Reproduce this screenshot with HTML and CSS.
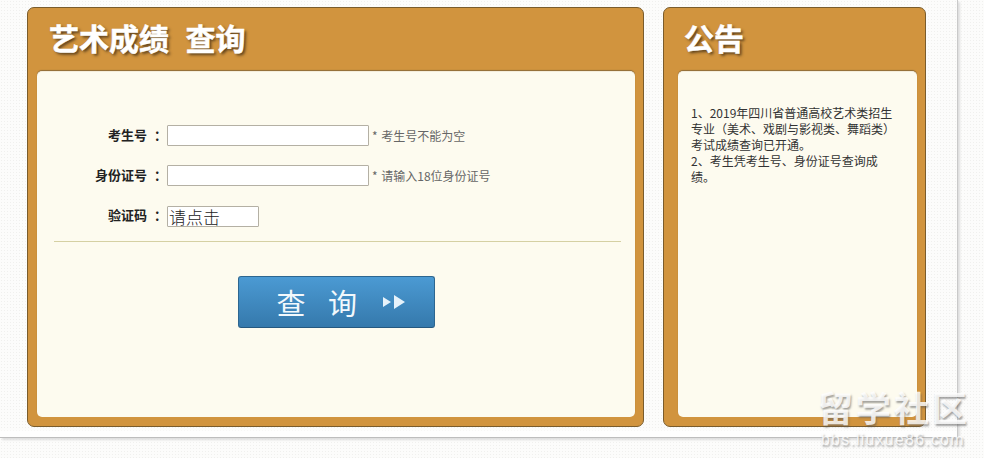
FILE: index.html
```html
<!DOCTYPE html>
<html lang="zh">
<head>
<meta charset="utf-8">
<title>艺术成绩查询</title>
<link rel="stylesheet" href="styles.css">
</head>
<body>
<div class="wrap">
  <section class="panel panel-main">
    <h1 class="panel-title">艺术成绩&nbsp;&nbsp;查询</h1>
    <div class="panel-body form-body">
      <div class="form-fields">
        <div class="row">
          <label class="label">考生号<span class="colon">：</span></label>
          <input class="field" type="text">
          <span class="hint">* 考生号不能为空</span>
        </div>
        <div class="row">
          <label class="label">身份证号<span class="colon">：</span></label>
          <input class="field" type="text">
          <span class="hint">* 请输入18位身份证号</span>
        </div>
        <div class="row row-code">
          <label class="label">验证码<span class="colon">：</span></label>
          <input class="field field-code" type="text" value="请点击">
        </div>
      </div>
      <div class="actions">
        <button class="submit" type="button">
          <span class="submit-text">查 询</span>
          <svg class="submit-icon" width="22" height="14" viewBox="0 0 22 14"><path d="M0 2l8 5-8 5zM11 0l11 7-11 7z" fill="#e6f2fa"/></svg>
        </button>
      </div>
    </div>
  </section>
  <section class="panel panel-side">
    <h2 class="panel-title">公告</h2>
    <div class="panel-body notice">
      <p>1、2019年四川省普通高校艺术类招生专业（美术、戏剧与影视类、舞蹈类）考试成绩查询已开通。<br>2、考生凭考生号、身份证号查询成绩。</p>
    </div>
  </section>
</div>
<div class="watermark">
  <div class="wm-big">留学社区</div>
  <div class="wm-small">bbs.liuxue86.com</div>
</div>
</body>
</html>
```
FILE: styles.css
```css
* { box-sizing: border-box; }
html, body { margin: 0; height: 458px; overflow: hidden; }
body {
  position: relative;
  font-family: "Liberation Sans", "Noto Sans CJK SC", sans-serif;
  background-color: #fcfcfb;
  background-image: radial-gradient(#f0f0ee 0.8px, transparent 0.9px);
  background-size: 3px 3px;
}
.wrap {
  width: 958px;
  height: 438px;
  display: flex;
  gap: 19px;
  padding: 7px 0 0 27px;
  border-right: 1px solid #c9c9c9;
  border-bottom: 1px solid #bdbdbd;
  box-shadow: 2px 2px 2px #dedede;
  background: linear-gradient(transparent 430px, #fefefe 431px);
}
.panel {
  height: 420px;
  background: #d1943e;
  border: 1px solid #7a5c2c;
  border-radius: 7px;
  padding: 0 8px 9px 9px;
  display: flex;
  flex-direction: column;
}
.panel-main { width: 617px; }
.panel-side { width: 263px; padding: 0 8px 9px 14px; }
.panel-title {
  margin: 0;
  height: 63px;
  padding: 10px 0 0 12px;
  font-family: "Noto Sans CJK SC", sans-serif;
  font-size: 30px;
  line-height: 38px;
  font-weight: 700;
  color: #fff;
  word-spacing: 1.5px;
  -webkit-text-stroke: 0.5px #fff;
  text-shadow: 2px 2px 3px #5a3f1c;
  white-space: pre;
}
.panel-side .panel-title { padding-left: 6px; }
.panel-body {
  flex: 1;
  background: #fdfbef;
  border-radius: 5px;
  border-top: 1px solid #f4eddc;
  box-shadow: 0 -1px 1px #8f6d3a;
}
.form-body { padding: 0 14px 0 17px; }
.form-fields {
  padding-top: 53px;
  height: 170px;
  border-bottom: 1px solid #d5d0a3;
}
.row {
  display: flex;
  align-items: center;
  height: 21px;
  margin-bottom: 19px;
}
.row-code { margin-top: 20px; }
.label {
  width: 113px;
  padding-bottom: 3px;
  text-align: right;
  font-family: "Noto Sans CJK SC", sans-serif;
  font-size: 13px;
  font-weight: 700;
  color: #222;
  white-space: nowrap;
}
.row-code .label { padding-bottom: 4px; }
.colon { margin-left: 7px; }
.field {
  width: 202px;
  height: 21px;
  padding: 0 1px;
  background: #fff;
  border: 1px solid #b4b0a4;
  border-radius: 1px;
  outline: none;
}
.field-code {
  width: 92px;
  font-family: "Noto Sans CJK SC", sans-serif;
  font-size: 17px;
  font-weight: 300;
  color: #222;
}
.hint {
  margin-left: 3px;
  padding-bottom: 1px;
  font-family: "Noto Sans CJK SC", sans-serif;
  font-size: 12px;
  word-spacing: 1px;
  color: #666;
  white-space: nowrap;
}
.actions {
  display: flex;
  justify-content: center;
  padding-top: 34px;
  padding-right: 3px;
}
.submit {
  display: flex;
  align-items: center;
  width: 197px;
  height: 52px;
  padding: 0 0 0 38px;
  background: linear-gradient(#4b9ad3, #3579ac);
  border: 1px solid #2d6690;
  border-bottom-color: #25587f;
  border-radius: 3px;
  cursor: pointer;
}
.submit-text {
  font-family: "Noto Sans CJK SC", sans-serif;
  font-size: 29px;
  font-weight: 400;
  word-spacing: 16px;
  color: #f2f8fc;
  white-space: nowrap;
}
.submit-icon { margin-left: 26px; }
.notice { padding: 33px 20px 0 13px; }
.notice p {
  margin: 0;
  font-family: "Noto Sans CJK SC", sans-serif;
  font-size: 12px;
  line-height: 16px;
  color: #333;
}
.watermark {
  position: absolute;
  left: 818px;
  top: 390px;
  width: 154px;
  color: rgba(255, 255, 255, 0.82);
  text-shadow: 1px 2px 2px rgba(90, 90, 90, 0.55);
  font-family: "Liberation Sans", "Noto Sans CJK SC", sans-serif;
}
.wm-big {
  font-size: 35px;
  line-height: 40px;
  font-weight: 700;
  white-space: nowrap;
  letter-spacing: 3px;
}
.wm-small {
  font-size: 16px;
  line-height: 19px;
  letter-spacing: 1.2px;
  padding-left: 3px;
  white-space: nowrap;
}
```
